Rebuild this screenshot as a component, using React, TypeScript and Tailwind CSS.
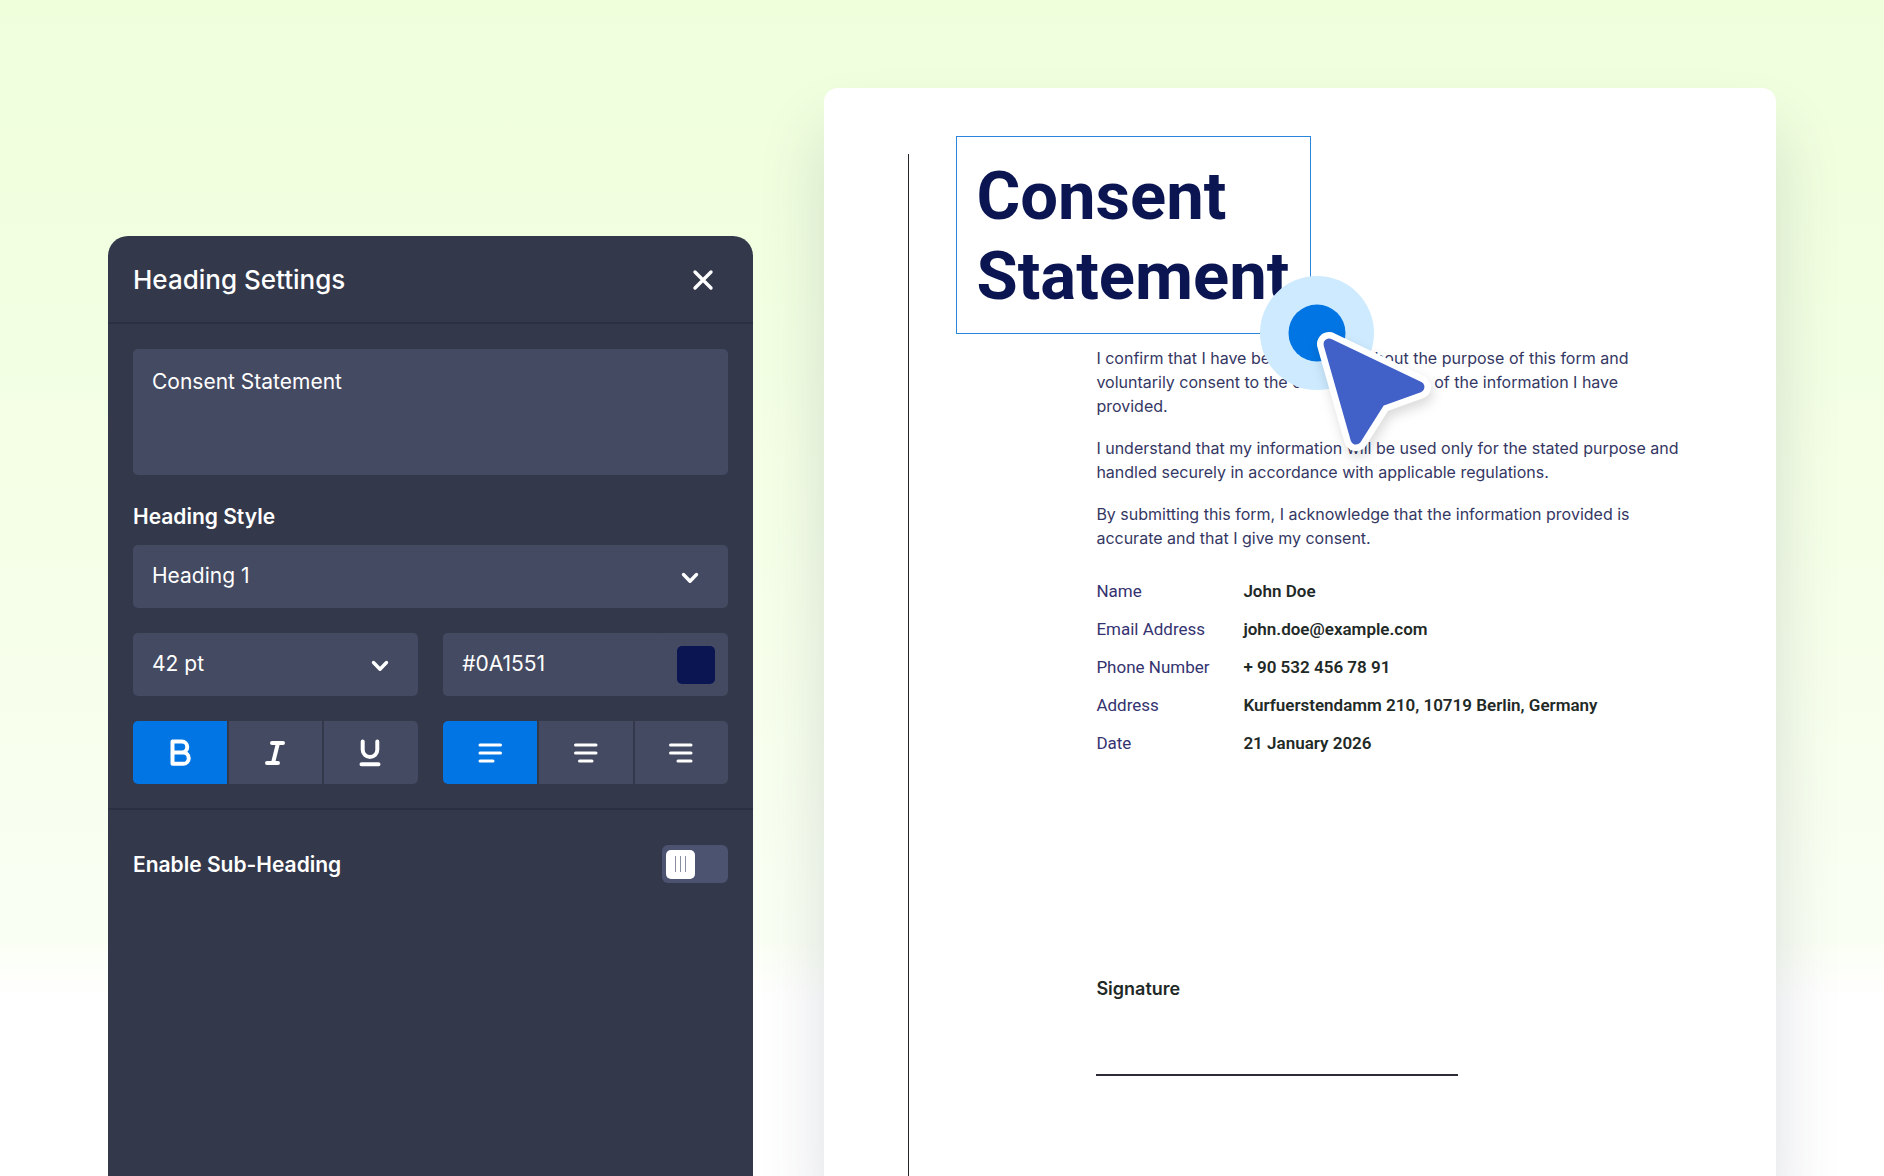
import { useState, type ReactNode } from "react";

const FIELD = "rounded-[5px] bg-[#444a61] text-[21px] leading-7 text-white outline-none";

function Chevron() {
  return (
    <svg className="pointer-events-none absolute top-1/2 right-[29px] -translate-y-1/2" width="18" height="14" viewBox="0 0 18 14" fill="none" aria-hidden="true">
      <path d="M2.5 4.5 9 11.2l6.5-6.7" stroke="#fff" strokeWidth="3.4" strokeLinecap="round" strokeLinejoin="round" />
    </svg>
  );
}

function Segment({ label, active, onClick, children }: { label: string; active: boolean; onClick: () => void; children: ReactNode }) {
  return (
    <button
      type="button"
      aria-label={label}
      aria-pressed={active}
      onClick={onClick}
      className={active ? "flex flex-1 items-center justify-center bg-[#0075e3]" : "flex flex-1 items-center justify-center bg-[#444a61]"}
    >
      <svg width="32" height="32" viewBox="0 0 32 32" fill="none" stroke="#fff" strokeLinecap="round" strokeLinejoin="round" aria-hidden="true">
        {children}
      </svg>
    </button>
  );
}

function SettingsPanel() {
  const [styles, setStyles] = useState({ bold: true, italic: false, underline: false });
  const [align, setAlign] = useState("left");
  const [sub, setSub] = useState(false);

  return (
    <section aria-label="Heading Settings" className="mt-[236px] rounded-t-[20px] bg-[#33384b] font-['Inter',sans-serif] text-white">
      <header className="flex h-[88px] items-center justify-between border-b-2 border-[#2a2f42] pt-px pr-9 pl-[25px]">
        <h2 className="text-[26px] leading-8 font-medium">Heading Settings</h2>
        <button type="button" aria-label="Close" className="flex size-7 items-center justify-center">
          <svg width="22" height="22" viewBox="0 0 22 22" fill="none" aria-hidden="true">
            <path d="m3 3 16 16M19 3 3 19" stroke="#fff" strokeWidth="3.4" strokeLinecap="round" />
          </svg>
        </button>
      </header>

      <div className="flex flex-col px-[25px] pt-[25px] pb-6">
        <textarea aria-label="Heading text" defaultValue="Consent Statement" className={`${FIELD} block h-[126px] w-full resize-none px-[19px] py-[19px]`} />

        <label htmlFor="heading-style" className="mt-7 mb-[14px] text-[21px] leading-7 font-semibold">
          Heading Style
        </label>
        <div className="relative">
          <select id="heading-style" className={`${FIELD} h-[63px] w-full appearance-none px-[19px] pb-[2px]`}>
            <option>Heading 1</option>
            <option>Heading 2</option>
            <option>Heading 3</option>
          </select>
          <Chevron />
        </div>

        <div className="mt-[25px] grid grid-cols-2 gap-[25px]">
          <div className="relative">
            <select aria-label="Font size" className={`${FIELD} h-[63px] w-full appearance-none px-[19px] pb-[2px]`}>
              <option>42 pt</option>
              <option>36 pt</option>
              <option>28 pt</option>
            </select>
            <Chevron />
          </div>
          <div className="flex h-[63px] items-center gap-3 rounded-[5px] bg-[#444a61] pr-[13px]">
            <input aria-label="Font color" defaultValue="#0A1551" className={`${FIELD} h-full w-full min-w-0 flex-1 pb-[2px] pl-[19px]`} />
            <button type="button" aria-label="Pick color" className="size-[38px] shrink-0 rounded-[5px] bg-[#0a1551]" />
          </div>

          <div role="group" aria-label="Text style" className="flex h-[63px] gap-[2px] overflow-hidden rounded-[5px]">
            <Segment label="Bold" active={styles.bold} onClick={() => setStyles({ ...styles, bold: !styles.bold })}>
              <path d="M8.500 4.600h9.300a5.400 5.400 0 0 1 0 10.900H8.500zM8.500 15.500h10.600a5.600 5.600 0 0 1 0 11.300H8.500z" strokeWidth="4" />
            </Segment>
            <Segment label="Italic" active={styles.italic} onClick={() => setStyles({ ...styles, italic: !styles.italic })}>
              <path d="M12 6h11M7 26h11M18 6l-5 20" strokeWidth="4" />
            </Segment>
            <Segment label="Underline" active={styles.underline} onClick={() => setStyles({ ...styles, underline: !styles.underline })}>
              <path d="M7.700 4.500v8.200a7.300 7.300 0 0 0 14.600 0V4.500M6.500 27.300h17" strokeWidth="4" />
            </Segment>
          </div>
          <div role="group" aria-label="Alignment" className="flex h-[63px] gap-[2px] overflow-hidden rounded-[5px]">
            <Segment label="Align left" active={align === "left"} onClick={() => setAlign("left")}>
              <path d="M6 8h20.500M6 16h20.500M6 24h13" strokeWidth="3" />
            </Segment>
            <Segment label="Align center" active={align === "center"} onClick={() => setAlign("center")}>
              <path d="M5.500 8h20.500M5.500 16h20.500M9.500 24h12.500" strokeWidth="3" />
            </Segment>
            <Segment label="Align right" active={align === "right"} onClick={() => setAlign("right")}>
              <path d="M4.500 8h20.500M4.500 16h20.500M12 24h13" strokeWidth="3" />
            </Segment>
          </div>
        </div>
      </div>

      <div className="flex items-center justify-between border-t-2 border-[#2a2f42] px-[25px] pt-[35px] pb-9">
        <label htmlFor="sub-heading" className="pt-[2px] text-[21px] leading-7 font-semibold">
          Enable Sub-Heading
        </label>
        <span className="relative flex h-[38px] w-[66px] items-center rounded-md bg-[#4c5370] p-1">
          <input
            id="sub-heading"
            type="checkbox"
            role="switch"
            checked={sub}
            onChange={(e) => setSub(e.target.checked)}
            className="peer absolute inset-0 size-full cursor-pointer appearance-none"
          />
          <span className="pointer-events-none flex h-[29px] w-[29px] items-center justify-center gap-1 rounded-[5px] bg-white peer-checked:ml-auto">
            <i className="h-4 w-px bg-[#8a8ea3]" />
            <i className="h-4 w-px bg-[#8a8ea3]" />
            <i className="h-4 w-px bg-[#8a8ea3]" />
          </span>
        </span>
      </div>
    </section>
  );
}

const DETAILS = [
  ["Name", "John Doe"],
  ["Email Address", "john.doe@example.com"],
  ["Phone Number", "+ 90 532 456 78 91"],
  ["Address", "Kurfuerstendamm 210, 10719 Berlin, Germany"],
  ["Date", "21 January 2026"],
];

function Pointer() {
  return (
    <svg className="pointer-events-none absolute top-[137px] left-[302px] z-10" width="200" height="200" viewBox="0 0 200 200" fill="none" aria-hidden="true">
      <circle cx="58" cy="59" r="57" fill="#cdeaff" />
      <circle cx="58" cy="59" r="28.500" fill="#0075e3" />
      <g className="drop-shadow-[2px_6px_6px_rgba(0,0,0,0.14)]" strokeLinejoin="round">
        <path d="M70 70 160 113 121 127 97 165Z" fill="#fff" stroke="#fff" strokeWidth="24" />
        <path d="M70 70 160 113 121 127 97 165Z" fill="#4161c9" stroke="#4161c9" strokeWidth="11" />
      </g>
    </svg>
  );
}

function DocumentPage() {
  return (
    <article className="mt-[88px] flex rounded-t-[14px] bg-white pl-[84px] shadow-[0_44px_64px_rgba(60,70,90,0.18)]">
      <div className="mt-[66px] w-px shrink-0 bg-[#23262e]" />
      <div className="min-w-0 flex-1 pt-12 pr-20 pl-[47px]">
        <div className="relative w-fit border border-[#2a85db]">
          <h1 className="w-[353px] px-[19px] pt-[19px] pb-[17px] font-['Roboto',sans-serif] text-[67px] leading-[80px] font-bold text-[#0a1551]">
            Consent Statement
          </h1>
          <Pointer />
        </div>

        <div className="pt-3 pl-[140px]">
          <div className="flex flex-col gap-[18px] font-['Inter',sans-serif] text-base leading-6 text-[#343763]">
            <p>
              I confirm that I have been informed about the purpose of this form and
              <br />
              voluntarily consent to the collection and use of the information I have
              <br />
              provided.
            </p>
            <p>
              I understand that my information will be used only for the stated purpose and
              <br />
              handled securely in accordance with applicable regulations.
            </p>
            <p>
              By submitting this form, I acknowledge that the information provided is
              <br />
              accurate and that I give my consent.
            </p>
          </div>

          <table className="mt-[22px] border-collapse font-['Roboto',sans-serif] text-[17px] leading-6">
            <tbody>
              {DETAILS.map(([label, value]) => (
                <tr key={label} className="h-[38px]">
                  <th scope="row" className="w-[147px] p-0 text-left font-normal text-[#343370]">
                    {label}
                  </th>
                  <td className="p-0 font-semibold whitespace-nowrap text-[#1f2a27]">{value}</td>
                </tr>
              ))}
            </tbody>
          </table>

          <p className="mt-[215px] font-['Inter',sans-serif] text-lg leading-6 font-semibold text-[#1f2a27]">Signature</p>
          <div className="mt-[73px] h-[2px] w-[362px] bg-[#2b2c36]" />
        </div>
      </div>
    </article>
  );
}

export default function App() {
  return (
    <main className="grid min-h-screen grid-cols-[645fr_951fr] gap-[71px] overflow-hidden bg-[linear-gradient(to_bottom,#efffdc_0%,#f2ffe1_25%,#f7ffec_60%,#fafff4_80%,#ffffff_85%)] px-[108px]">
      <SettingsPanel />
      <DocumentPage />
    </main>
  );
}
